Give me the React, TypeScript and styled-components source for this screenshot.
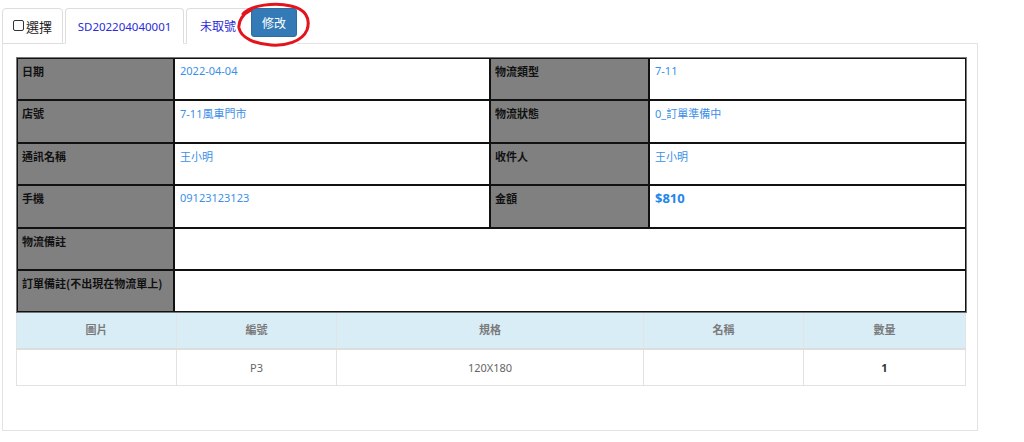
import React from "react";
import styled, { createGlobalStyle } from "styled-components";

const GlobalStyle = createGlobalStyle`
  html, body {
    margin: 0;
    padding: 0;
    background: #ffffff;
    font-family: "Noto Sans", "Noto Sans CJK TC", sans-serif;
  }
`;

const Page = styled.div`
  padding: 8px 0 0 2px;
  width: 976px;
`;

const TabBar = styled.div`
  position: relative;
  display: flex;
  gap: 2px;
  border-bottom: 1px solid #e3e3e3;
  height: 35px;
`;

interface TabProps {
  active?: boolean;
  width?: number;
}

const Tab = styled.div<TabProps>`
  box-sizing: border-box;
  width: ${({ width }) => (width ? `${width}px` : "auto")};
  height: 36px;
  margin-bottom: -1px;
  display: flex;
  align-items: center;
  justify-content: center;
  border: 1px solid #dddddd;
  border-bottom-color: ${({ active }) => (active ? "#ffffff" : "#dddddd")};
  border-radius: 4px 4px 0 0;
  background: #ffffff;
  font-size: 11.5px;
  color: #2b2bd8;
`;

const SelectLabel = styled.label`
  display: flex;
  align-items: center;
  gap: 1px;
  color: #222222;
  font-size: 13px;
  font-family: "Noto Sans CJK TC", sans-serif;
`;

const Check = styled.input`
  appearance: none;
  box-sizing: border-box;
  width: 11px;
  height: 11px;
  margin: 0 1px 2px 0;
  border: 1px solid #333333;
  border-radius: 2px;
  background: #ffffff;
`;

const StatusTab = styled(Tab)`
  align-items: flex-start;
  justify-content: flex-start;
  padding: 0 0 0 13px;
  border-right: none;
  gap: 15px;
  font-size: 12px;
`;

const StatusText = styled.span`
  margin-top: 8px;
  font-family: "Noto Sans CJK TC", sans-serif;
`;

const EditButton = styled.button`
  box-sizing: border-box;
  width: 46px;
  height: 29px;
  margin-top: -1px;
  border: 1px solid #2e6da4;
  border-radius: 3px;
  background: #337ab7;
  color: #ffffff;
  font-size: 12px;
  font-family: "Noto Sans CJK TC", sans-serif;
  padding: 0;
`;

const Circle = styled.svg`
  position: absolute;
  left: 233px;
  top: -8px;
  pointer-events: none;
`;

const Panel = styled.div`
  border: 1px solid #e3e3e3;
  border-top: none;
  padding: 13px 12px 44px 13px;
`;

const InfoTable = styled.table`
  width: 949px;
  border-collapse: separate;
  border-spacing: 0;
  border: 1px solid #777777;
  table-layout: fixed;
  font-size: 11px;
`;

const LabelCell = styled.td`
  box-sizing: border-box;
  height: 42.4px;
  padding: 4px 4px;
  vertical-align: top;
  border: 1px solid #111111;
  background: #808080;
  color: #111111;
  font-weight: 700;
  font-family: "Noto Sans CJK TC", sans-serif;
`;

interface ValueProps {
  strong?: boolean;
}

const ValueCell = styled.td<ValueProps>`
  box-sizing: border-box;
  height: 42.4px;
  padding: ${({ strong }) => (strong ? "3px 5px" : "4px 5px")};
  vertical-align: top;
  border: 1px solid #111111;
  background: #ffffff;
  color: ${({ strong }) => (strong ? "#1f86ea" : "#3b8fe8")};
  font-size: ${({ strong }) => (strong ? "13px" : "11px")};
  font-weight: ${({ strong }) => (strong ? 700 : 400)};
`;

const ItemTable = styled.table`
  width: 949px;
  border-collapse: collapse;
  table-layout: fixed;
  font-size: 11px;
  font-family: "Noto Sans", "Noto Sans CJK TC", sans-serif;
`;

const HeadCell = styled.th`
  box-sizing: border-box;
  height: 36px;
  padding: 0 8px 4px;
  background: #d9edf7;
  border: 1px solid #e4e4e4;
  border-top: none;
  border-bottom: 2px solid #dddddd;
  color: #7a7a7a;
  font-weight: 700;
  text-align: center;
`;

interface ItemCellProps {
  bold?: boolean;
}

const ItemCell = styled.td<ItemCellProps>`
  box-sizing: border-box;
  height: 36px;
  padding: 0 8px;
  border: 1px solid #e2e2e2;
  text-align: center;
  color: ${({ bold }) => (bold ? "#333333" : "#666666")};
  font-weight: ${({ bold }) => (bold ? 700 : 400)};
`;

const infoRows: [string, string, string, string, boolean?][] = [
  ["日期", "2022-04-04", "物流類型", "7-11"],
  ["店號", "7-11風車門市", "物流狀態", "0_訂單準備中"],
  ["通訊名稱", "王小明", "收件人", "王小明"],
  ["手機", "09123123123", "金額", "$810", true],
];

const noteRows = ["物流備註", "訂單備註(不出現在物流單上)"];

const columns = [
  { title: "圖片", width: 160 },
  { title: "編號", width: 160 },
  { title: "規格", width: 307 },
  { title: "名稱", width: 160 },
  { title: "數量", width: 162 },
];

export default function App() {
  return (
    <>
      <GlobalStyle />
      <Page>
        <TabBar>
          <Tab width={61}>
            <SelectLabel>
              <Check type="checkbox" />
              選擇
            </SelectLabel>
          </Tab>
          <Tab active width={119}>
            SD202204040001
          </Tab>
          <StatusTab active width={111}>
            <StatusText>未取號</StatusText>
            <EditButton>修改</EditButton>
          </StatusTab>
          <Circle width="80" height="54" viewBox="0 0 80 54">
            <path
              d="M8 14 C 16 5, 40 2, 56 6 C 70 9, 76 18, 72 30 C 67 42, 50 46, 36 45 C 20 44, 6 38, 4 28 C 3 21, 8 14, 16 10"
              fill="none"
              stroke="#e3141b"
              strokeWidth="3"
              strokeLinecap="round"
            />
          </Circle>
        </TabBar>
        <Panel>
          <InfoTable>
            <colgroup>
              <col style={{ width: 157 }} />
              <col style={{ width: 316 }} />
              <col style={{ width: 159 }} />
              <col style={{ width: 317 }} />
            </colgroup>
            <tbody>
              {infoRows.map(([l1, v1, l2, v2, strong]) => (
                <tr key={l1}>
                  <LabelCell>{l1}</LabelCell>
                  <ValueCell>{v1}</ValueCell>
                  <LabelCell>{l2}</LabelCell>
                  <ValueCell strong={strong}>{v2}</ValueCell>
                </tr>
              ))}
              {noteRows.map((label) => (
                <tr key={label}>
                  <LabelCell>{label}</LabelCell>
                  <ValueCell colSpan={3} />
                </tr>
              ))}
            </tbody>
          </InfoTable>
          <ItemTable>
            <colgroup>
              {columns.map((c) => (
                <col key={c.title} style={{ width: c.width }} />
              ))}
            </colgroup>
            <thead>
              <tr>
                {columns.map((c) => (
                  <HeadCell key={c.title}>{c.title}</HeadCell>
                ))}
              </tr>
            </thead>
            <tbody>
              <tr>
                <ItemCell />
                <ItemCell>P3</ItemCell>
                <ItemCell>120X180</ItemCell>
                <ItemCell />
                <ItemCell bold>1</ItemCell>
              </tr>
            </tbody>
          </ItemTable>
        </Panel>
      </Page>
    </>
  );
}
